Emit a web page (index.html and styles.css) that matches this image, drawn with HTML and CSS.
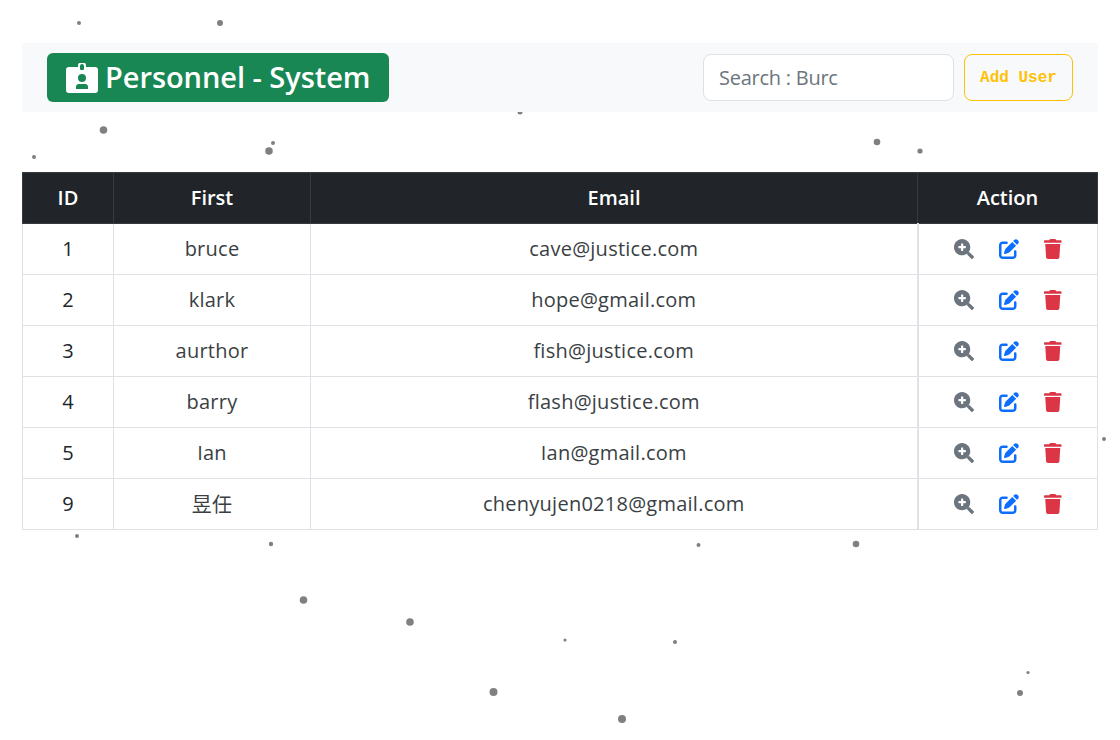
FILE: index.html
```html
<!DOCTYPE html>
<html lang="en">
<head>
    <meta charset="UTF-8">
    <meta name="viewport" content="width=device-width, initial-scale=1.0">
    <title>Personnel - System</title>
    <link rel="stylesheet" href="styles.css">
</head>
<body>
    <svg class="particles" width="1120" height="740">
        <circle cx="79" cy="23" r="2"/><circle cx="220" cy="23" r="3"/>
        <circle cx="103.500" cy="130" r="3.800"/><circle cx="34" cy="157" r="2"/>
        <circle cx="269" cy="151" r="3.800"/><circle cx="273" cy="143" r="2"/>
        <circle cx="520" cy="112" r="2.500"/><circle cx="877" cy="142" r="3.300"/>
        <circle cx="920" cy="151" r="2.600"/><circle cx="1104" cy="439" r="2"/>
        <circle cx="77" cy="536" r="2"/><circle cx="271" cy="544" r="2.200"/>
        <circle cx="698.500" cy="545" r="2"/><circle cx="856" cy="544" r="3.300"/>
        <circle cx="303.500" cy="600" r="3.800"/><circle cx="410" cy="622" r="3.800"/>
        <circle cx="565" cy="640" r="1.600"/><circle cx="675" cy="642" r="2"/>
        <circle cx="1028" cy="672.500" r="1.600"/><circle cx="1020" cy="693" r="3"/>
        <circle cx="493.500" cy="692" r="4"/><circle cx="622" cy="719" r="4"/>
    </svg>

    <div class="page">
        <nav class="navbar">
            <a class="brand">
                <svg class="brand-icon" viewBox="0 0 32 30">
                    <path fill-rule="evenodd" d="M12 4V3a4 4 0 0 1 8 0v1h9a3 3 0 0 1 3 3v20a3 3 0 0 1-3 3H3a3 3 0 0 1-3-3V7a3 3 0 0 1 3-3zM14 3v3a1 1 0 0 0 1 1h2a1 1 0 0 0 1-1V3a2 2 0 0 0-4 0zM16 11a4 4 0 1 0 0 8 4 4 0 0 0 0-8zM10 26h12v-2a3 3 0 0 0-3-3h-6a3 3 0 0 0-3 3z"/>
                </svg>
                <span class="brand-text">Personnel - System</span>
            </a>
            <form class="search-form">
                <input class="search-input" type="text" placeholder="Search : Burc">
                <button class="btn-add" type="button">Add User</button>
            </form>
        </nav>

        <table class="user-table">
            <thead>
                <tr>
                    <th class="col-id">ID</th>
                    <th class="col-first">First</th>
                    <th>Email</th>
                    <th class="col-action">Action</th>
                </tr>
            </thead>
            <tbody id="rows"></tbody>
        </table>
    </div>

    <script src="app.js"></script>
</body>
</html>
```

FILE: styles.css
```css
* {
    box-sizing: border-box;
}

body {
    margin: 0;
    background: #fff;
    color: #212529;
    font-family: "Open Sans", "Noto Sans CJK TC", sans-serif;
    font-size: 20px;
}

.particles {
    position: absolute;
    top: 0;
    left: 0;
    fill: #808080;
}

.page {
    position: relative;
    padding: 43px 22px 0;
}

.navbar {
    display: flex;
    align-items: center;
    justify-content: space-between;
    height: 69px;
    padding: 0 25px;
    background: #f8f9fa;
}

.brand {
    display: flex;
    align-items: center;
    gap: 7px;
    width: 342px;
    height: 49px;
    padding: 0 0 0 19px;
    background: #198754;
    border-radius: 6px;
    color: #fff;
    font-size: 29px;
    font-weight: 600;
    letter-spacing: -0.05px;
}

.brand-text {
    padding-bottom: 2px;
    white-space: nowrap;
}

.brand-icon {
    width: 32px;
    height: 30px;
    fill: #fff;
}

.search-form {
    display: flex;
    gap: 10px;
}

.search-input {
    width: 251px;
    height: 47px;
    padding: 0 15px;
    border: 1px solid #dee2e6;
    border-radius: 8px;
    background: #fff;
    font-family: inherit;
    font-size: 20px;
    letter-spacing: -0.25px;
}

.search-input::placeholder {
    color: #6c757d;
    opacity: 1;
}

.btn-add {
    width: 109px;
    height: 47px;
    border: 1px solid #ffc107;
    border-radius: 8px;
    background: transparent;
    color: #ffc107;
    font-family: "Liberation Mono", monospace;
    font-size: 16px;
    font-weight: 700;
}

.user-table {
    width: 1076px;
    margin-top: 60px;
    border-collapse: collapse;
    table-layout: fixed;
    text-align: center;
    background: #fff;
}

.user-table th {
    height: 51px;
    padding: 0 0 2px;
    background: #212529;
    border: 1px solid #373b3e;
    color: #fff;
    font-weight: 600;
}

.user-table td {
    height: 51px;
    padding: 0 0 2px;
    border: 1px solid #dee2e6;
    color: #3a3f44;
    letter-spacing: 0.25px;
}

.user-table .cell-id {
    color: #212529;
}

.col-id {
    width: 91px;
}

.col-first {
    width: 197px;
}

.col-action {
    width: 180px;
}

.user-table .actions {
    padding: 0;
    border-left-width: 2px;
}

.actions-inner {
    display: flex;
    justify-content: center;
    align-items: center;
    gap: 25px;
}

.icon {
    width: 20px;
    height: 20px;
}

.icon-view {
    fill: #6c757d;
}

.icon-edit {
    fill: #0d6efd;
}

.icon-delete {
    width: 17.500px;
    fill: #dc3545;
}
```

FILE: app.js
```js
const users = [
    { id: 1, first: "bruce", email: "cave@justice.com" },
    { id: 2, first: "klark", email: "hope@gmail.com" },
    { id: 3, first: "aurthor", email: "fish@justice.com" },
    { id: 4, first: "barry", email: "flash@justice.com" },
    { id: 5, first: "Ian", email: "Ian@gmail.com" },
    { id: 9, first: "昱任", email: "chenyujen0218@gmail.com" }
];

const actions = `
    <div class="actions-inner">
        <svg class="icon icon-view" viewBox="0 0 512 512"><path fill-rule="evenodd" d="M304 192v32c0 6.600-5.400 12-12 12h-56v56c0 6.600-5.400 12-12 12h-32c-6.600 0-12-5.400-12-12v-56h-56c-6.600 0-12-5.400-12-12v-32c0-6.600 5.400-12 12-12h56v-56c0-6.600 5.400-12 12-12h32c6.600 0 12 5.400 12 12v56h56c6.600 0 12 5.400 12 12zm201 284.700L476.700 505c-9.400 9.400-24.600 9.400-33.900 0L343 405.300c-4.500-4.500-7-10.600-7-17V372c-35.300 27.600-79.700 44-128 44C93.100 416 0 322.900 0 208S93.100 0 208 0s208 93.100 208 208c0 48.300-16.400 92.700-44 128h16.300c6.400 0 12.500 2.500 17 7l99.700 99.700c9.300 9.400 9.300 24.600 0 34z"/></svg>
        <svg class="icon icon-edit" viewBox="0 0 512 512"><path d="M471.600 21.700c-21.900-21.900-57.300-21.900-79.200 0L362.300 51.700l97.900 97.900 30.100-30.100c21.900-21.900 21.900-57.300 0-79.200L471.600 21.700zm-299.200 220c-6.100 6.100-10.800 13.600-13.500 21.900l-29.600 88.800c-2.900 8.600-.6 18.100 5.800 24.600s15.900 8.700 24.600 5.800l88.800-29.600c8.200-2.700 15.700-7.400 21.900-13.500L437.700 172.300 339.700 74.300 172.400 241.700zM96 64C43 64 0 107 0 160V416c0 53 43 96 96 96H352c53 0 96-43 96-96V320c0-17.700-14.300-32-32-32s-32 14.300-32 32v96c0 17.700-14.300 32-32 32H96c-17.700 0-32-14.300-32-32V160c0-17.700 14.300-32 32-32h96c17.700 0 32-14.300 32-32s-14.300-32-32-32H96z"/></svg>
        <svg class="icon icon-delete" viewBox="0 0 448 512"><path d="M432 32H312l-9.400-18.700A24 24 0 0 0 281.100 0H166.800a23.720 23.720 0 0 0-21.400 13.300L136 32H16A16 16 0 0 0 0 48v32a16 16 0 0 0 16 16h416a16 16 0 0 0 16-16V48a16 16 0 0 0-16-16zM53.200 467a48 48 0 0 0 47.900 45h245.800a48 48 0 0 0 47.900-45L416 128H32z"/></svg>
    </div>`;

document.getElementById("rows").innerHTML = users.map(u => `
    <tr>
        <td class="cell-id">${u.id}</td>
        <td>${u.first}</td>
        <td>${u.email}</td>
        <td class="actions">${actions}</td>
    </tr>`).join("");
```
